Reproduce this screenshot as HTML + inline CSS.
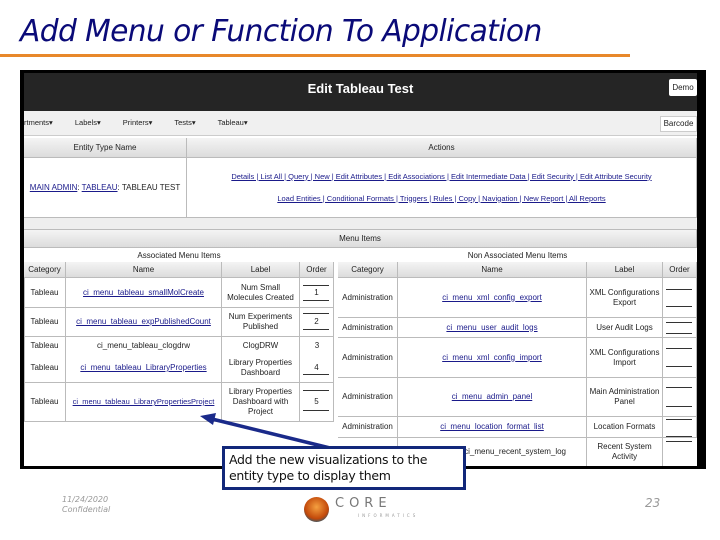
<!DOCTYPE html>
<html><head><meta charset="utf-8"><style>
*{margin:0;padding:0;box-sizing:border-box}
body{width:720px;height:540px;background:#fff;position:relative;overflow:hidden;font-family:"DejaVu Sans","Liberation Sans",sans-serif}
.a{position:absolute}
.t{font-size:8px;color:#222;text-align:center;line-height:10px;display:flex;align-items:center;justify-content:center;font-family:"Liberation Sans",sans-serif}
.l{color:#1a1a8a;text-decoration:underline}
.h{background:linear-gradient(#f4f4f4,#dcdcdc)}
.b{border-right:1px solid #bbb;border-bottom:1px solid #bbb}
.ord{position:absolute;width:26px;border-top:1px solid #333}
</style></head><body>
<div class="a" style="left:20px;top:14px;font-size:30px;font-style:italic;color:#0a0a78;letter-spacing:-0.6px;transform:scaleX(0.99);transform-origin:left">Add Menu or Function To Application</div>
<div class="a" style="left:0;top:54px;width:630px;height:3px;background:#e8882a"></div>

<div class="a" style="left:20px;top:70px;width:686px;height:399px;background:#000"></div>
<div class="a" style="left:24px;top:73px;width:673px;height:393px;background:#fff"></div>
<div class="a" style="left:24px;top:73px;width:673px;height:38px;background:#252525"></div>
<div class="a t" style="left:24px;top:80px;width:673px;height:18px;color:#fff;font-size:13px;font-weight:bold">Edit Tableau Test</div>
<div class="a t" style="left:669px;top:79px;width:28px;height:17px;background:#fff;border-radius:2px;font-size:8px">Demo</div>
<div class="a" style="left:24px;top:111px;width:673px;height:25px;background:#f0f0f0;border-bottom:1px solid #ccc"></div>
<div class="a t" style="left:24px;top:118px;width:300px;height:10px;justify-content:flex-start;word-spacing:20px;font-size:7.5px">rtments▾ Labels▾ Printers▾ Tests▾ Tableau▾</div>
<div class="a t" style="left:660px;top:116px;width:37px;height:16px;background:#fff;border:1px solid #ccc;font-size:8px">Barcode</div>

<div class="a h b t" style="left:24px;top:138px;width:163px;height:20px">Entity Type Name</div>
<div class="a h b t" style="left:187px;top:138px;width:510px;height:20px">Actions</div>
<div class="a b t" style="left:24px;top:158px;width:163px;height:60px;border-right:1px solid #bbb"><span><span class="l">MAIN ADMIN</span>: <span class="l">TABLEAU</span>: TABLEAU TEST</span></div>
<div class="a b t" style="left:187px;top:158px;width:510px;height:60px;flex-direction:column;line-height:22px;font-size:7.5px">
<span class="l">Details | List All | Query | New | Edit Attributes | Edit Associations | Edit Intermediate Data | Edit Security | Edit Attribute Security</span>
<span class="l">Load Entities | Conditional Formats | Triggers | Rules | Copy | Navigation | New Report | All Reports</span></div>
<div class="a" style="left:24px;top:218px;width:673px;height:12px;background:#eee;border-bottom:1px solid #bbb"></div>
<div class="a h b t" style="left:24px;top:230px;width:673px;height:18px">Menu Items</div>

<div class="a t" style="left:24px;top:250px;width:310px;height:12px">Associated Menu Items</div>
<div class="a t" style="left:338px;top:250px;width:359px;height:12px">Non Associated Menu Items</div>

<div class="a" style="left:24px;top:262px;width:310px;height:160px;border:1px solid #bbb;border-top:0"></div>
<div class="a h b t" style="left:24px;top:262px;width:42px;height:16px">Category</div>
<div class="a h b t" style="left:66px;top:262px;width:156px;height:16px">Name</div>
<div class="a h b t" style="left:222px;top:262px;width:78px;height:16px">Label</div>
<div class="a h b t" style="left:300px;top:262px;width:34px;height:16px">Order</div>

<div class="a b t" style="left:24px;top:278px;width:42px;height:30px">Tableau</div>
<div class="a b t l" style="left:66px;top:278px;width:156px;height:30px">ci_menu_tableau_smallMolCreate</div>
<div class="a b t" style="left:222px;top:278px;width:78px;height:30px">Num Small Molecules Created</div>
<div class="a b t" style="left:300px;top:278px;width:34px;height:30px">1</div>
<div class="a b t" style="left:24px;top:308px;width:42px;height:29px">Tableau</div>
<div class="a b t l" style="left:66px;top:308px;width:156px;height:29px">ci_menu_tableau_expPublishedCount</div>
<div class="a b t" style="left:222px;top:308px;width:78px;height:29px">Num Experiments Published</div>
<div class="a b t" style="left:300px;top:308px;width:34px;height:29px">2</div>
<div class="a t" style="left:24px;top:337px;width:42px;height:17px;border-right:1px solid #bbb">Tableau</div>
<div class="a t" style="left:66px;top:337px;width:156px;height:17px;border-right:1px solid #bbb">ci_menu_tableau_clogdrw</div>
<div class="a t" style="left:222px;top:337px;width:78px;height:17px;border-right:1px solid #bbb">ClogDRW</div>
<div class="a t" style="left:300px;top:337px;width:34px;height:17px">3</div>
<div class="a b t" style="left:24px;top:354px;width:42px;height:29px">Tableau</div>
<div class="a b t l" style="left:66px;top:354px;width:156px;height:29px">ci_menu_tableau_LibraryProperties</div>
<div class="a b t" style="left:222px;top:354px;width:78px;height:29px">Library Properties Dashboard</div>
<div class="a b t" style="left:300px;top:354px;width:34px;height:29px">4</div>
<div class="a b t" style="left:24px;top:383px;width:42px;height:39px">Tableau</div>
<div class="a b t l" style="left:66px;top:383px;width:156px;height:39px;font-size:7.5px">ci_menu_tableau_LibraryPropertiesProject</div>
<div class="a b t" style="left:222px;top:383px;width:78px;height:39px">Library Properties Dashboard with Project</div>
<div class="a b t" style="left:300px;top:383px;width:34px;height:39px">5</div>
<div class="ord" style="left:303px;top:285px"></div><div class="ord" style="left:303px;top:300px"></div>
<div class="ord" style="left:303px;top:313px"></div><div class="ord" style="left:303px;top:329px"></div>
<div class="ord" style="left:303px;top:374px"></div><div class="ord" style="left:303px;top:390px"></div><div class="ord" style="left:303px;top:410px"></div>

<div class="a h b t" style="left:338px;top:262px;width:60px;height:16px">Category</div>
<div class="a h b t" style="left:398px;top:262px;width:189px;height:16px">Name</div>
<div class="a h b t" style="left:587px;top:262px;width:76px;height:16px">Label</div>
<div class="a h b t" style="left:663px;top:262px;width:34px;height:16px">Order</div>

<div class="a b t" style="left:338px;top:278px;width:60px;height:40px">Administration</div>
<div class="a b t l" style="left:398px;top:278px;width:189px;height:40px">ci_menu_xml_config_export</div>
<div class="a b t" style="left:587px;top:278px;width:76px;height:40px">XML Configurations Export</div>
<div class="a b t" style="left:663px;top:278px;width:34px;height:40px"></div>
<div class="a b t" style="left:338px;top:318px;width:60px;height:20px">Administration</div>
<div class="a b t l" style="left:398px;top:318px;width:189px;height:20px">ci_menu_user_audit_logs</div>
<div class="a b t" style="left:587px;top:318px;width:76px;height:20px">User Audit Logs</div>
<div class="a b t" style="left:663px;top:318px;width:34px;height:20px"></div>
<div class="a b t" style="left:338px;top:338px;width:60px;height:40px">Administration</div>
<div class="a b t l" style="left:398px;top:338px;width:189px;height:40px">ci_menu_xml_config_import</div>
<div class="a b t" style="left:587px;top:338px;width:76px;height:40px">XML Configurations Import</div>
<div class="a b t" style="left:663px;top:338px;width:34px;height:40px"></div>
<div class="a b t" style="left:338px;top:378px;width:60px;height:39px">Administration</div>
<div class="a b t l" style="left:398px;top:378px;width:189px;height:39px">ci_menu_admin_panel</div>
<div class="a b t" style="left:587px;top:378px;width:76px;height:39px">Main Administration Panel</div>
<div class="a b t" style="left:663px;top:378px;width:34px;height:39px"></div>
<div class="a b t" style="left:338px;top:417px;width:60px;height:21px">Administration</div>
<div class="a b t l" style="left:398px;top:417px;width:189px;height:21px">ci_menu_location_format_list</div>
<div class="a b t" style="left:587px;top:417px;width:76px;height:21px">Location Formats</div>
<div class="a b t" style="left:663px;top:417px;width:34px;height:21px"></div>
<div class="a t" style="left:338px;top:438px;width:60px;height:28px;border-right:1px solid #bbb"></div>
<div class="a t" style="left:398px;top:438px;width:189px;height:28px;border-right:1px solid #bbb;justify-content:flex-end;padding-right:20px">ci_menu_recent_system_log</div>
<div class="a t" style="left:587px;top:438px;width:76px;height:28px;border-right:1px solid #bbb">Recent System Activity</div>
<div class="ord" style="left:666px;top:289px"></div><div class="ord" style="left:666px;top:306px"></div>
<div class="ord" style="left:666px;top:322px"></div><div class="ord" style="left:666px;top:333px"></div>
<div class="ord" style="left:666px;top:348px"></div><div class="ord" style="left:666px;top:366px"></div>
<div class="ord" style="left:666px;top:387px"></div><div class="ord" style="left:666px;top:406px"></div>
<div class="ord" style="left:666px;top:419px"></div><div class="ord" style="left:666px;top:436px"></div><div class="ord" style="left:666px;top:441px"></div>

<svg class="a" style="left:0;top:0" width="720" height="540">
<line x1="330" y1="448" x2="212" y2="419" stroke="#1a2a8a" stroke-width="3.5"/>
<polygon points="200,416 216,413 213,425" fill="#1a2a8a"/>
</svg>
<div class="a" style="left:222px;top:446px;width:244px;height:44px;background:#fff;border:3px solid #12287a;padding:3px 4px;font-size:12.5px;line-height:16px;color:#111;font-family:'DejaVu Sans',sans-serif;letter-spacing:-0.3px">Add the new visualizations to the entity type to display them</div>

<div class="a" style="left:62px;top:495px;font-size:8px;font-style:italic;color:#999;line-height:10px">11/24/2020<br>Confidential</div>
<div class="a" style="left:304px;top:497px;width:25px;height:25px;border-radius:50%;background:radial-gradient(circle at 50% 40%,#f5a040,#c2480a 60%,#555 75%,#aaa)"></div>
<div class="a" style="left:335px;top:496px;font-size:13px;letter-spacing:5px;color:#777">CORE</div>
<div class="a" style="left:358px;top:513px;font-size:4px;letter-spacing:3px;color:#999">INFORMATICS</div>
<div class="a" style="left:645px;top:496px;font-size:12px;font-style:italic;color:#999">23</div>
</body></html>
